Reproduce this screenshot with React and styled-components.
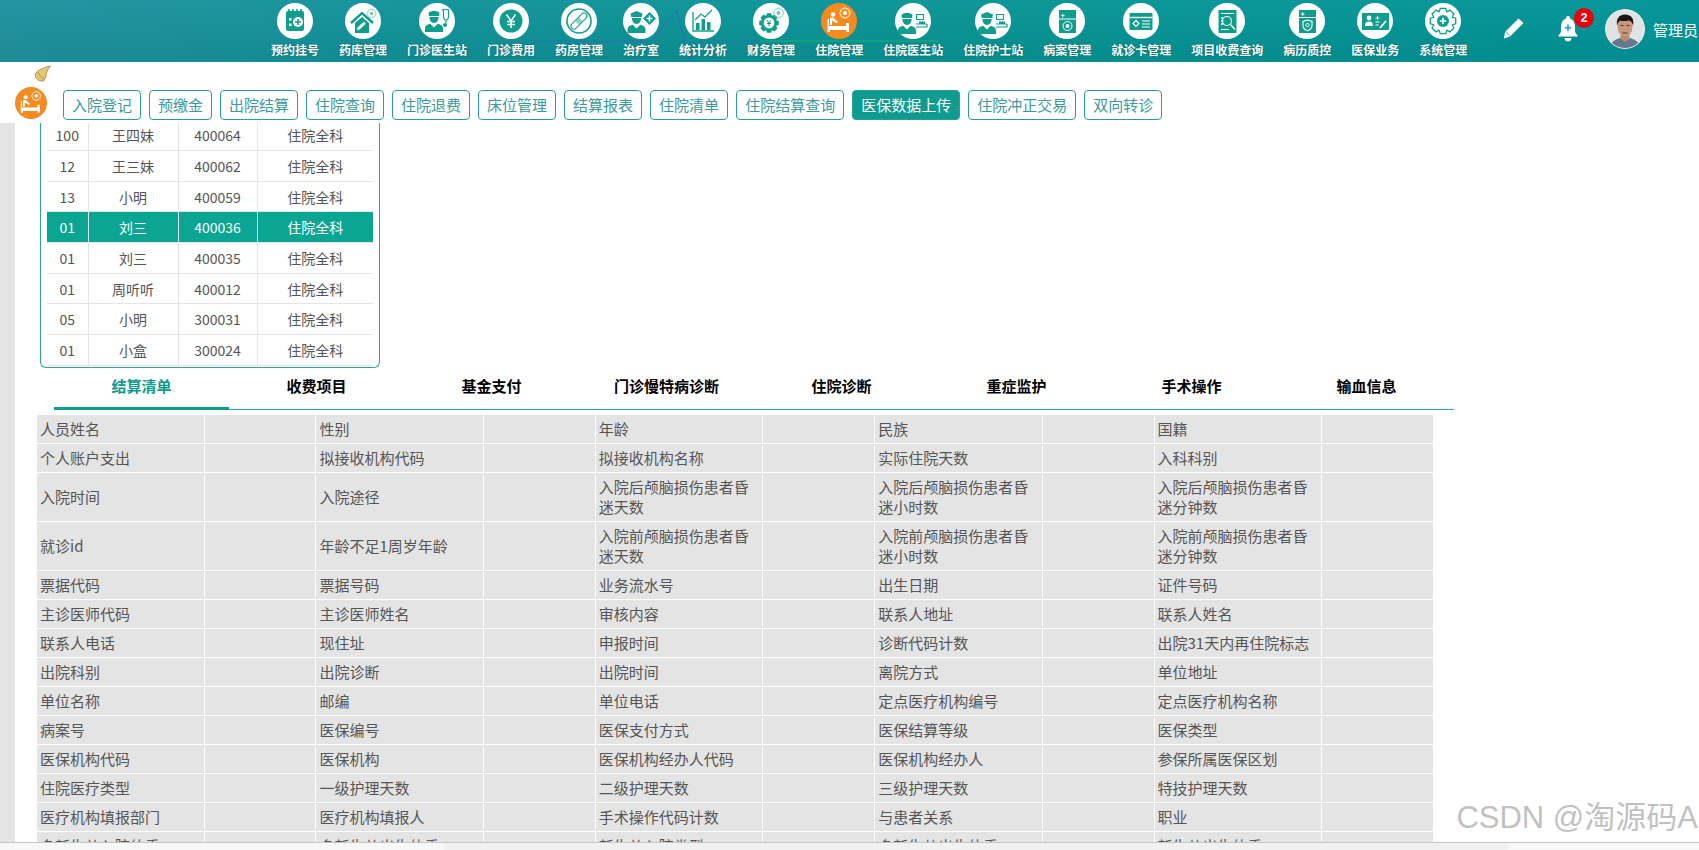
import React from 'react';
import styled, { createGlobalStyle } from 'styled-components';

const T = '#0f9d8d';
const G = '#7fc4bb';

const Global = createGlobalStyle`
  html, body { margin: 0; padding: 0; background: #fff; overflow: hidden; }
  body { font-family: "Noto Sans CJK SC", "Liberation Sans", sans-serif; }
  * { box-sizing: border-box; }
`;

const Page = styled.div`
  position: relative;
  width: 1699px;
  height: 850px;
  display: flex;
  flex-direction: column;
  overflow: hidden;
`;

const Header = styled.header`
  position: relative;
  flex: 0 0 62px;
  display: flex;
  padding-left: 271px;
  padding-right: 1px;
  background:
    linear-gradient(180deg, rgba(255, 255, 255, 0.03), rgba(0, 0, 0, 0.05)),
    linear-gradient(100deg, #1f919f 0%, #11929a 22%, #069494 60%, #009398 100%);
`;

const Pulse = styled.svg`
  position: absolute;
  left: 0;
  top: 0;
  pointer-events: none;
`;

const Nav = styled.nav`
  position: relative;
  display: flex;
  gap: 20px;
`;

const NavItem = styled.div`
  display: flex;
  flex-direction: column;
  align-items: center;
  padding-top: 3px;
`;

const Disc = styled.div`
  width: 36px;
  height: 36px;
  border-radius: 50%;
  background: ${p => (p.$active ? '#f58a20' : '#fff')};
  svg { display: block; }
`;

const NavLabel = styled.span`
  margin-top: 2px;
  font-size: 12px;
  line-height: 18px;
  font-weight: 700;
  color: #fff;
  white-space: nowrap;
  text-shadow: 0 0 2px rgba(0, 60, 60, 0.55);
`;

const UserArea = styled.div`
  position: relative;
  margin-left: auto;
  display: flex;
  align-items: flex-start;
`;

const Pencil = styled.svg`
  margin-top: 18px;
  margin-right: 34px;
`;

const BellWrap = styled.div`
  position: relative;
  margin-top: 16px;
  margin-right: 27px;
  width: 20px;
  height: 26px;
`;

const Badge = styled.span`
  position: absolute;
  left: 16px;
  top: -8px;
  width: 20px;
  height: 20px;
  border-radius: 50%;
  background: #e8000f;
  color: #fff;
  font: 700 12px/20px "Liberation Sans", sans-serif;
  text-align: center;
`;

const Avatar = styled.svg`
  margin-top: 9px;
  margin-right: 8px;
  border-radius: 50%;
`;

const UserName = styled.span`
  margin-top: 19px;
  font-size: 15px;
  line-height: 22px;
  color: #fff;
  white-space: nowrap;
`;

const Toolbar = styled.div`
  position: relative;
  flex: 0 0 61px;
  display: flex;
  align-items: flex-start;
  gap: 16px;
  padding: 25px 0 0 15px;
  background: #fff;
`;

const Broom = styled.svg`
  position: absolute;
  left: 34px;
  top: 3px;
`;

const ModuleDisc = styled.div`
  flex: none;
  width: 32px;
  height: 32px;
  border-radius: 50%;
  background: #f58a20;
  svg { display: block; }
`;

const Buttons = styled.div`
  display: flex;
  gap: 8px;
  margin-top: 3px;
`;

const ToolButton = styled.button`
  height: 30px;
  padding: 0 8px;
  border: 1px solid #2b9c9e;
  border-radius: 4px;
  background: ${p => (p.$active ? '#0e9c8f' : '#fff')};
  color: ${p => (p.$active ? '#fff' : '#3c9a9a')};
  font-family: inherit;
  font-size: 15px;
  line-height: 28px;
  white-space: nowrap;
`;

const Main = styled.main`
  flex: 1;
  min-height: 0;
  display: flex;
  overflow: hidden;
`;

const Gutter = styled.div`
  flex: 0 0 15px;
  background: #e4e4e4;
`;

const Content = styled.div`
  flex: 1;
  min-width: 0;
  overflow: hidden;
  background: #fff;
`;

const PatientCard = styled.div`
  width: 340px;
  margin: -3px 0 0 25px;
  padding: 0 6px 1px;
  border: 1px solid #2aa5a0;
  border-top: none;
  border-radius: 0 0 6px 6px;
`;

const PatientTable = styled.table`
  width: 326px;
  border-collapse: collapse;
  table-layout: fixed;
  font-size: 14px;
  color: #555;
  text-align: center;
`;

const PatientRow = styled.tr`
  height: 30.65px;
  background: ${p => (p.$selected ? '#0ba594' : '#fff')};
  color: ${p => (p.$selected ? '#fff' : '#555')};
  td { border: 1px solid #e2e6ea; padding: 0; }
  &:first-child td { border-top: none; }
  td:first-child { border-left: none; }
  td:last-child { border-right: none; }
`;

const Tabs = styled.div`
  display: flex;
  width: 1400px;
  height: 42px;
  margin-left: 39px;
  border-bottom: 1px solid #2aa5a0;
`;

const Tab = styled.div`
  flex: 0 0 175px;
  height: 42px;
  padding-top: 7px;
  border-bottom: ${p => (p.$active ? '3px solid #0e9c8f' : 'none')};
  font-size: 15px;
  line-height: 22px;
  font-weight: 700;
  text-align: center;
  color: ${p => (p.$active ? '#0e9c8f' : '#000')};
`;

const DetailTable = styled.table`
  width: 1398px;
  margin: 4px 0 0 21px;
  border-collapse: collapse;
  table-layout: fixed;
  font-size: 15px;
  line-height: 20px;
  color: #555;
`;

const LabelCol = styled.col`
  width: 12%;
`;

const ValueCol = styled.col`
  width: 8%;
`;

const DetailCell = styled.td`
  height: 29px;
  padding: 4px 5px 4px 3px;
  background: #e4e4e4;
  border: 1px solid #fff;
`;

const Footer = styled.div`
  flex: 0 0 8px;
  border-top: 1px solid #c6c6c6;
  background: linear-gradient(90deg, #f8f8f8 444px, #f1f1f1 444px, #f1f1f1 1508px, #f8f8f8 1508px);
`;

const Watermark = styled.div`
  position: absolute;
  right: 1px;
  bottom: 15px;
  font-family: "Liberation Sans", "Noto Sans CJK SC", sans-serif;
  font-size: 31px;
  line-height: 34px;
  color: rgba(130, 130, 130, 0.5);
  text-shadow: 0 0 1px rgba(255, 255, 255, 0.8);
  white-space: nowrap;
`;

const gear = (cx, cy, r, n = 8) => {
  const pts = [];
  const step = (Math.PI * 2) / n;
  for (let i = 0; i < n; i++) {
    const a = i * step;
    [[-0.3, r * 0.78], [-0.17, r], [0.17, r], [0.3, r * 0.78]].forEach(([o, R]) => {
      pts.push(`${(cx + R * Math.cos(a + o * step * 1.6)).toFixed(2)} ${(cy + R * Math.sin(a + o * step * 1.6)).toFixed(2)}`);
    });
  }
  return `M${pts.join('L')}Z`;
};

const Svg = ({ children }) => <svg width="36" height="36" viewBox="0 0 36 36">{children}</svg>;

const MiniGear = ({ x, y, r = 4, c = G }) => (
  <g>
    <path d={gear(x, y, r)} fill="none" stroke={c} strokeWidth="0.8" />
    <circle cx={x} cy={y} r={r * 0.4} fill={c} />
  </g>
);

const Person = ({ x = 14, y = 0, nurse }) => (
  <g transform={`translate(${x} ${y})`} fill={T}>
    <path d={nurse ? 'M-6 8.5 L0 6 L6 8.5 L5.2 12 H-5.2Z' : 'M-5.4 8.5 Q0 5 5.4 8.5 L5.2 12 H-5.2Z'} />
    <path d="M-4.6 13 H4.6 Q4.6 18.4 0 19 Q-4.6 18.4 -4.6 13Z" />
    <path d="M-9 28 V24.5 Q-9 20.8 -3.8 19.8 L0 23.4 L3.8 19.8 Q9 20.8 9 24.5 V28Z" />
  </g>
);

const Monitor = () => (
  <g fill="none" stroke={T}>
    <rect x="21.5" y="11.5" width="7" height="5" strokeWidth="1" />
    <path d="M21 21 H32 M21 24 H32 V21" strokeWidth="1.2" />
    <rect x="24" y="18.5" width="6" height="2.5" fill={T} stroke="none" />
  </g>
);

const BedPatient = ({ c = '#fff' }) => (
  <g fill={c}>
    <circle cx="12" cy="11.5" r="2.3" />
    <path d="M9 15 L12 14.5 L17 19 L15.5 20.3 L11 17.5 V22 H9Z" />
    <path d="M6.5 16 H8 V23 H25 V20 H28 V29 H25.5 V27 H9 V29 H6.5Z" />
    <path d="M9 24 H25 V27 H9Z" />
  </g>
);

const icons = {
  calendar: (
    <Svg>
      <path d="M9 10 Q9 8 11 8 H25 Q27 8 27 10 V26 Q27 28 25 28 H11 Q9 28 9 26Z" fill={T} />
      <path d="M12 6.5 v3 M16 6.5 v3 M20 6.5 v3 M24 6.5 v3" stroke={T} strokeWidth="1.6" strokeLinecap="round" />
      <rect x="12" y="15" width="2.6" height="2.6" fill="#fff" />
      <rect x="12" y="20.5" width="2.6" height="2.6" fill="#fff" />
      <circle cx="21" cy="19" r="5" fill="#fff" />
      <path d="M21 16 v6 M18 19 h6" stroke={T} strokeWidth="1.6" />
    </Svg>
  ),
  house: (
    <Svg>
      <path d="M6 20 L17 10 L28 20" fill="none" stroke={T} strokeWidth="2.4" />
      <path d="M10 20 L17 14 L24 20 V30 H10Z" fill={T} />
      <path d="M13.5 25.5 L19 20.5" stroke="#fff" strokeWidth="3" strokeLinecap="round" />
      <MiniGear x={26.5} y={10.5} r={4.5} />
    </Svg>
  ),
  doctor: (
    <Svg>
      <Person x={15} y={1} />
      <path d="M23 7 Q27 5.5 30 7 M24.5 7 V13 Q24.5 17 27 17 Q29.5 17 29.5 13 V7 M27 17 V20" fill="none" stroke={T} strokeWidth="1.2" />
      <circle cx="26" cy="22" r="2" fill={T} />
    </Svg>
  ),
  yuan: (
    <Svg>
      <circle cx="18" cy="18" r="11.5" fill={T} />
      <path d="M13.5 11.5 L18 18 L22.5 11.5 M18 18 V25 M14 18.5 H22 M14 21.5 H22" fill="none" stroke="#fff" strokeWidth="1.5" />
    </Svg>
  ),
  pill: (
    <Svg>
      <circle cx="18" cy="18" r="12" fill="none" stroke={T} strokeWidth="1.6" />
      <path d="M13 23 L23 13" stroke={T} strokeWidth="7" strokeLinecap="round" />
      <path d="M13 23 L23 13" stroke="#fff" strokeWidth="5" strokeLinecap="round" />
      <path d="M16 20 L20 16" stroke={T} strokeWidth="5" opacity="0.45" />
    </Svg>
  ),
  nurseCross: (
    <Svg>
      <Person x={13.5} y={2} nurse />
      <path d="M26.5 9 L33 15.5 L26.5 22 L20 15.5Z" fill={T} />
      <path d="M26.5 12.5 v6 M23.5 15.5 h6" stroke="#fff" strokeWidth="1.6" />
    </Svg>
  ),
  chart: (
    <Svg>
      <path d="M8 9 V28 H29" fill="none" stroke={T} strokeWidth="1.3" />
      <path d="M11 20 h3.5 v7 h-3.5Z M16.5 16 h3.5 v11 h-3.5Z M22 19 h3.5 v8 h-3.5Z" fill={T} />
      <path d="M10 17 L16 11 L20 14 L27 7" fill="none" stroke={T} strokeWidth="1.3" />
    </Svg>
  ),
  finance: (
    <Svg>
      <path d={gear(16, 20, 10)} fill={T} />
      <circle cx="16" cy="20" r="5.4" fill="#fff" />
      <path d="M13.8 17 L16 20 L18.2 17 M16 20 V23.5 M14 20.5 H18" fill="none" stroke={T} strokeWidth="1" />
      <MiniGear x={25.5} y={10} r={5} />
    </Svg>
  ),
  bed: (
    <Svg>
      <BedPatient />
      <path d={gear(24, 10, 5.2)} fill="none" stroke="#fff" strokeWidth="0.9" />
      <circle cx="24" cy="10" r="2" fill="#fff" />
    </Svg>
  ),
  docBed: (
    <Svg>
      <Person x={12} y={3} />
      <Monitor />
    </Svg>
  ),
  nurseBed: (
    <Svg>
      <Person x={12} y={3} nurse />
      <Monitor />
    </Svg>
  ),
  record: (
    <Svg>
      <rect x="10" y="7" width="17" height="23" fill={T} />
      <path d="M12 12.5 h3.5 M13.8 10.8 v3.5 M10 16 H27" stroke="#fff" strokeWidth="1" />
      <circle cx="18.5" cy="23" r="4.5" fill="none" stroke="#fff" strokeWidth="1" />
      <circle cx="18.5" cy="23" r="2" fill="#fff" />
    </Svg>
  ),
  card: (
    <Svg>
      <rect x="6.5" y="10" width="23" height="17" rx="1" fill={T} />
      <path d="M6.5 14.5 H29.5" stroke="#fff" strokeWidth="1.4" />
      <path d="M13 17.5 L16 20.5 L13 23.5 L10 20.5Z" fill="none" stroke="#fff" strokeWidth="1.1" />
      <path d="M19 18 H27 M19 21 H27 M19 24 H27" stroke="#fff" strokeWidth="1.1" />
    </Svg>
  ),
  search: (
    <Svg>
      <rect x="9.5" y="7" width="18" height="23" fill={T} />
      <path d="M12 10.5 H25 M12 26.5 H20" stroke="#fff" strokeWidth="1.2" />
      <circle cx="18" cy="18" r="4.5" fill="none" stroke="#fff" strokeWidth="1.2" />
      <path d="M12 15 h2 M12 18 h2 M12 21 h2 M21.5 21.5 L26 26.5" stroke="#fff" strokeWidth="1.3" />
    </Svg>
  ),
  shield: (
    <Svg>
      <rect x="10" y="7" width="17" height="23" fill={T} />
      <path d="M12 11 h3.5 M13.8 9.3 v3.5 M10 14.5 H27" stroke="#fff" strokeWidth="1" />
      <path d="M18.5 17 L23 18.5 V22.5 Q23 26 18.5 27.8 Q14 26 14 22.5 V18.5Z" fill="none" stroke="#fff" strokeWidth="1.1" />
      <circle cx="18.5" cy="22" r="1.7" fill="none" stroke="#fff" strokeWidth="0.9" />
    </Svg>
  ),
  insurance: (
    <Svg>
      <rect x="5" y="10" width="27" height="17" fill={T} />
      <circle cx="12" cy="15" r="2.4" fill="#fff" />
      <path d="M8 23 Q8 18.6 12 18.6 Q16 18.6 16 23Z" fill="#fff" />
      <path d="M18.5 15 h4 M20.5 13 v4 M18.5 19 h4 M18.5 22 h3" stroke="#fff" strokeWidth="1" />
      <path d="M23 25 L29 18" stroke="#fff" strokeWidth="1.8" />
    </Svg>
  ),
  system: (
    <Svg>
      <path d={gear(18, 18, 13)} fill="none" stroke={T} strokeWidth="1.3" />
      <circle cx="18" cy="18" r="6" fill={T} />
      <path d="M18 14.8 v6.4 M14.8 18 h6.4" stroke="#fff" strokeWidth="1.7" />
    </Svg>
  ),
};

const navItems = [
  ['预约挂号', 'calendar'], ['药库管理', 'house'], ['门诊医生站', 'doctor'], ['门诊费用', 'yuan'],
  ['药房管理', 'pill'], ['治疗室', 'nurseCross'], ['统计分析', 'chart'], ['财务管理', 'finance'],
  ['住院管理', 'bed', true], ['住院医生站', 'docBed'], ['住院护士站', 'nurseBed'], ['病案管理', 'record'],
  ['就诊卡管理', 'card'], ['项目收费查询', 'search'], ['病历质控', 'shield'], ['医保业务', 'insurance'],
  ['系统管理', 'system'],
];

const tools = ['入院登记', '预缴金', '出院结算', '住院查询', '住院退费', '床位管理', '结算报表', '住院清单', '住院结算查询', '医保数据上传', '住院冲正交易', '双向转诊'];

const patients = [
  ['100', '王四妹', '400064'], ['12', '王三妹', '400062'], ['13', '小明', '400059'], ['01', '刘三', '400036'],
  ['01', '刘三', '400035'], ['01', '周听听', '400012'], ['05', '小明', '300031'], ['01', '小盒', '300024'],
];

const tabs = ['结算清单', '收费项目', '基金支付', '门诊慢特病诊断', '住院诊断', '重症监护', '手术操作', '输血信息'];

const fields = [
  ['人员姓名', '性别', '年龄', '民族', '国籍'],
  ['个人账户支出', '拟接收机构代码', '拟接收机构名称', '实际住院天数', '入科科别'],
  ['入院时间', '入院途径', '入院后颅脑损伤患者昏迷天数', '入院后颅脑损伤患者昏迷小时数', '入院后颅脑损伤患者昏迷分钟数'],
  ['就诊id', '年龄不足1周岁年龄', '入院前颅脑损伤患者昏迷天数', '入院前颅脑损伤患者昏迷小时数', '入院前颅脑损伤患者昏迷分钟数'],
  ['票据代码', '票据号码', '业务流水号', '出生日期', '证件号码'],
  ['主诊医师代码', '主诊医师姓名', '审核内容', '联系人地址', '联系人姓名'],
  ['联系人电话', '现住址', '申报时间', '诊断代码计数', '出院31天内再住院标志'],
  ['出院科别', '出院诊断', '出院时间', '离院方式', '单位地址'],
  ['单位名称', '邮编', '单位电话', '定点医疗机构编号', '定点医疗机构名称'],
  ['病案号', '医保编号', '医保支付方式', '医保结算等级', '医保类型'],
  ['医保机构代码', '医保机构', '医保机构经办人代码', '医保机构经办人', '参保所属医保区划'],
  ['住院医疗类型', '一级护理天数', '二级护理天数', '三级护理天数', '特技护理天数'],
  ['医疗机构填报部门', '医疗机构填报人', '手术操作代码计数', '与患者关系', '职业'],
  ['多新生儿入院体重', '多新生儿出生体重', '新生儿入院类型', '多新生儿出生体重', '新生儿出生体重'],
];

export default function App() {
  return (
    <Page>
      <Global />
      <Header>
        <Pulse width="1000" height="62" viewBox="0 0 1000 62">
          <path d="M532 41 H640 L652 41 L676 10 L690 61 L704 36 L716 41 H760" fill="none" stroke="#2a6cc0" strokeWidth="1" opacity="0.8" />
          <path d="M760 41 H938" fill="none" stroke="#12b36a" strokeWidth="1" />
        </Pulse>
        <Nav>
          {navItems.map(([label, icon, active]) => (
            <NavItem key={label}>
              <Disc $active={active}>{icons[icon]}</Disc>
              <NavLabel>{label}</NavLabel>
            </NavItem>
          ))}
        </Nav>
        <UserArea>
          <Pencil width="21" height="21" viewBox="0 0 21 21">
            <path d="M15.5 0.5 L20.5 5 L7 18.5 L1 20.5 L2 14Z" fill="#fff" />
            <path d="M2.5 13.5 L7.5 18" stroke="#0d9090" strokeWidth="0.7" />
          </Pencil>
          <BellWrap>
            <svg width="20" height="26" viewBox="0 0 20 26">
              <path d="M10 0 Q12 0 12 2.4 Q17 4 17 11 V16 L20 20.5 H0 L3 16 V11 Q3 4 8 2.4 Q8 0 10 0Z" fill="#fff" />
              <path d="M6.5 22 H13.5 Q13 25.5 10 25.5 Q7 25.5 6.5 22Z" fill="#fff" />
              <path d="M10 8.5 V15 M6.8 11.8 H13.2" stroke="#4d9fd6" strokeWidth="2" />
            </svg>
            <Badge>2</Badge>
          </BellWrap>
          <Avatar width="40" height="40" viewBox="0 0 40 40">
            <circle cx="20" cy="20" r="20" fill="#dfe3e3" />
            <path d="M4 40 Q6 31 15 29 L20 32 L25 29 Q34 31 36 40Z" fill="#64788c" />
            <path d="M15.5 24 H24.5 V30 L20 33 L15.5 30Z" fill="#b98a6e" />
            <ellipse cx="20" cy="18" rx="7.5" ry="9.5" fill="#c9987c" />
            <path d="M12 17 Q10.5 6 20 5.5 Q30 6 28 17 Q27 12 24 11.5 Q18 12.5 15 11.5 Q13 13 12 17Z" fill="#1c1613" />
            <path d="M15.5 16.5 h3 M21.5 16.5 h3 M17.5 24 h5" stroke="#40291f" strokeWidth="0.9" />
            <circle cx="20" cy="20" r="19.5" fill="none" stroke="#e9eeee" strokeWidth="1" />
          </Avatar>
          <UserName>管理员</UserName>
        </UserArea>
      </Header>

      <Toolbar>
        <Broom width="18" height="18" viewBox="0 0 18 18">
          <path d="M16.5 1 L10.5 2.5 L3.5 6 Q0 9 1.5 12.5 Q4.5 17 9.5 16 Q12 14 12.5 8 L14 4.5Z" fill="#e6c56e" stroke="#94824e" strokeWidth="0.7" />
          <path d="M4 7 Q6 12 10.5 14.5" fill="none" stroke="#b1954c" strokeWidth="1" />
        </Broom>
        <ModuleDisc>
          <svg width="32" height="32" viewBox="0 0 36 36">
            <BedPatient />
            <path d={gear(24, 10, 5.2)} fill="none" stroke="#fff" strokeWidth="0.9" />
            <circle cx="24" cy="10" r="2" fill="#fff" />
          </svg>
        </ModuleDisc>
        <Buttons>
          {tools.map(t => (
            <ToolButton key={t} $active={t === '医保数据上传'}>{t}</ToolButton>
          ))}
        </Buttons>
      </Toolbar>

      <Main>
        <Gutter />
        <Content>
          <PatientCard>
            <PatientTable>
              <colgroup>
                <col style={{ width: 41 }} />
                <col style={{ width: 90 }} />
                <col style={{ width: 79 }} />
                <col style={{ width: 116 }} />
              </colgroup>
              <tbody>
                {patients.map(([a, b, c], i) => (
                  <PatientRow key={c} $selected={i === 3}>
                    <td>{a}</td>
                    <td>{b}</td>
                    <td>{c}</td>
                    <td>住院全科</td>
                  </PatientRow>
                ))}
              </tbody>
            </PatientTable>
          </PatientCard>

          <Tabs>
            {tabs.map((t, i) => (
              <Tab key={t} $active={i === 0}>{t}</Tab>
            ))}
          </Tabs>

          <DetailTable>
            <colgroup>
              {[0, 1, 2, 3, 4].map(i => (
                <React.Fragment key={i}>
                  <LabelCol />
                  <ValueCol />
                </React.Fragment>
              ))}
            </colgroup>
            <tbody>
              {fields.map(row => (
                <tr key={row[0]}>
                  {row.map((f, i) => (
                    <React.Fragment key={i}>
                      <DetailCell>{f}</DetailCell>
                      <DetailCell />
                    </React.Fragment>
                  ))}
                </tr>
              ))}
            </tbody>
          </DetailTable>
        </Content>
      </Main>

      <Footer />
      <Watermark>CSDN @淘源码A</Watermark>
    </Page>
  );
}
